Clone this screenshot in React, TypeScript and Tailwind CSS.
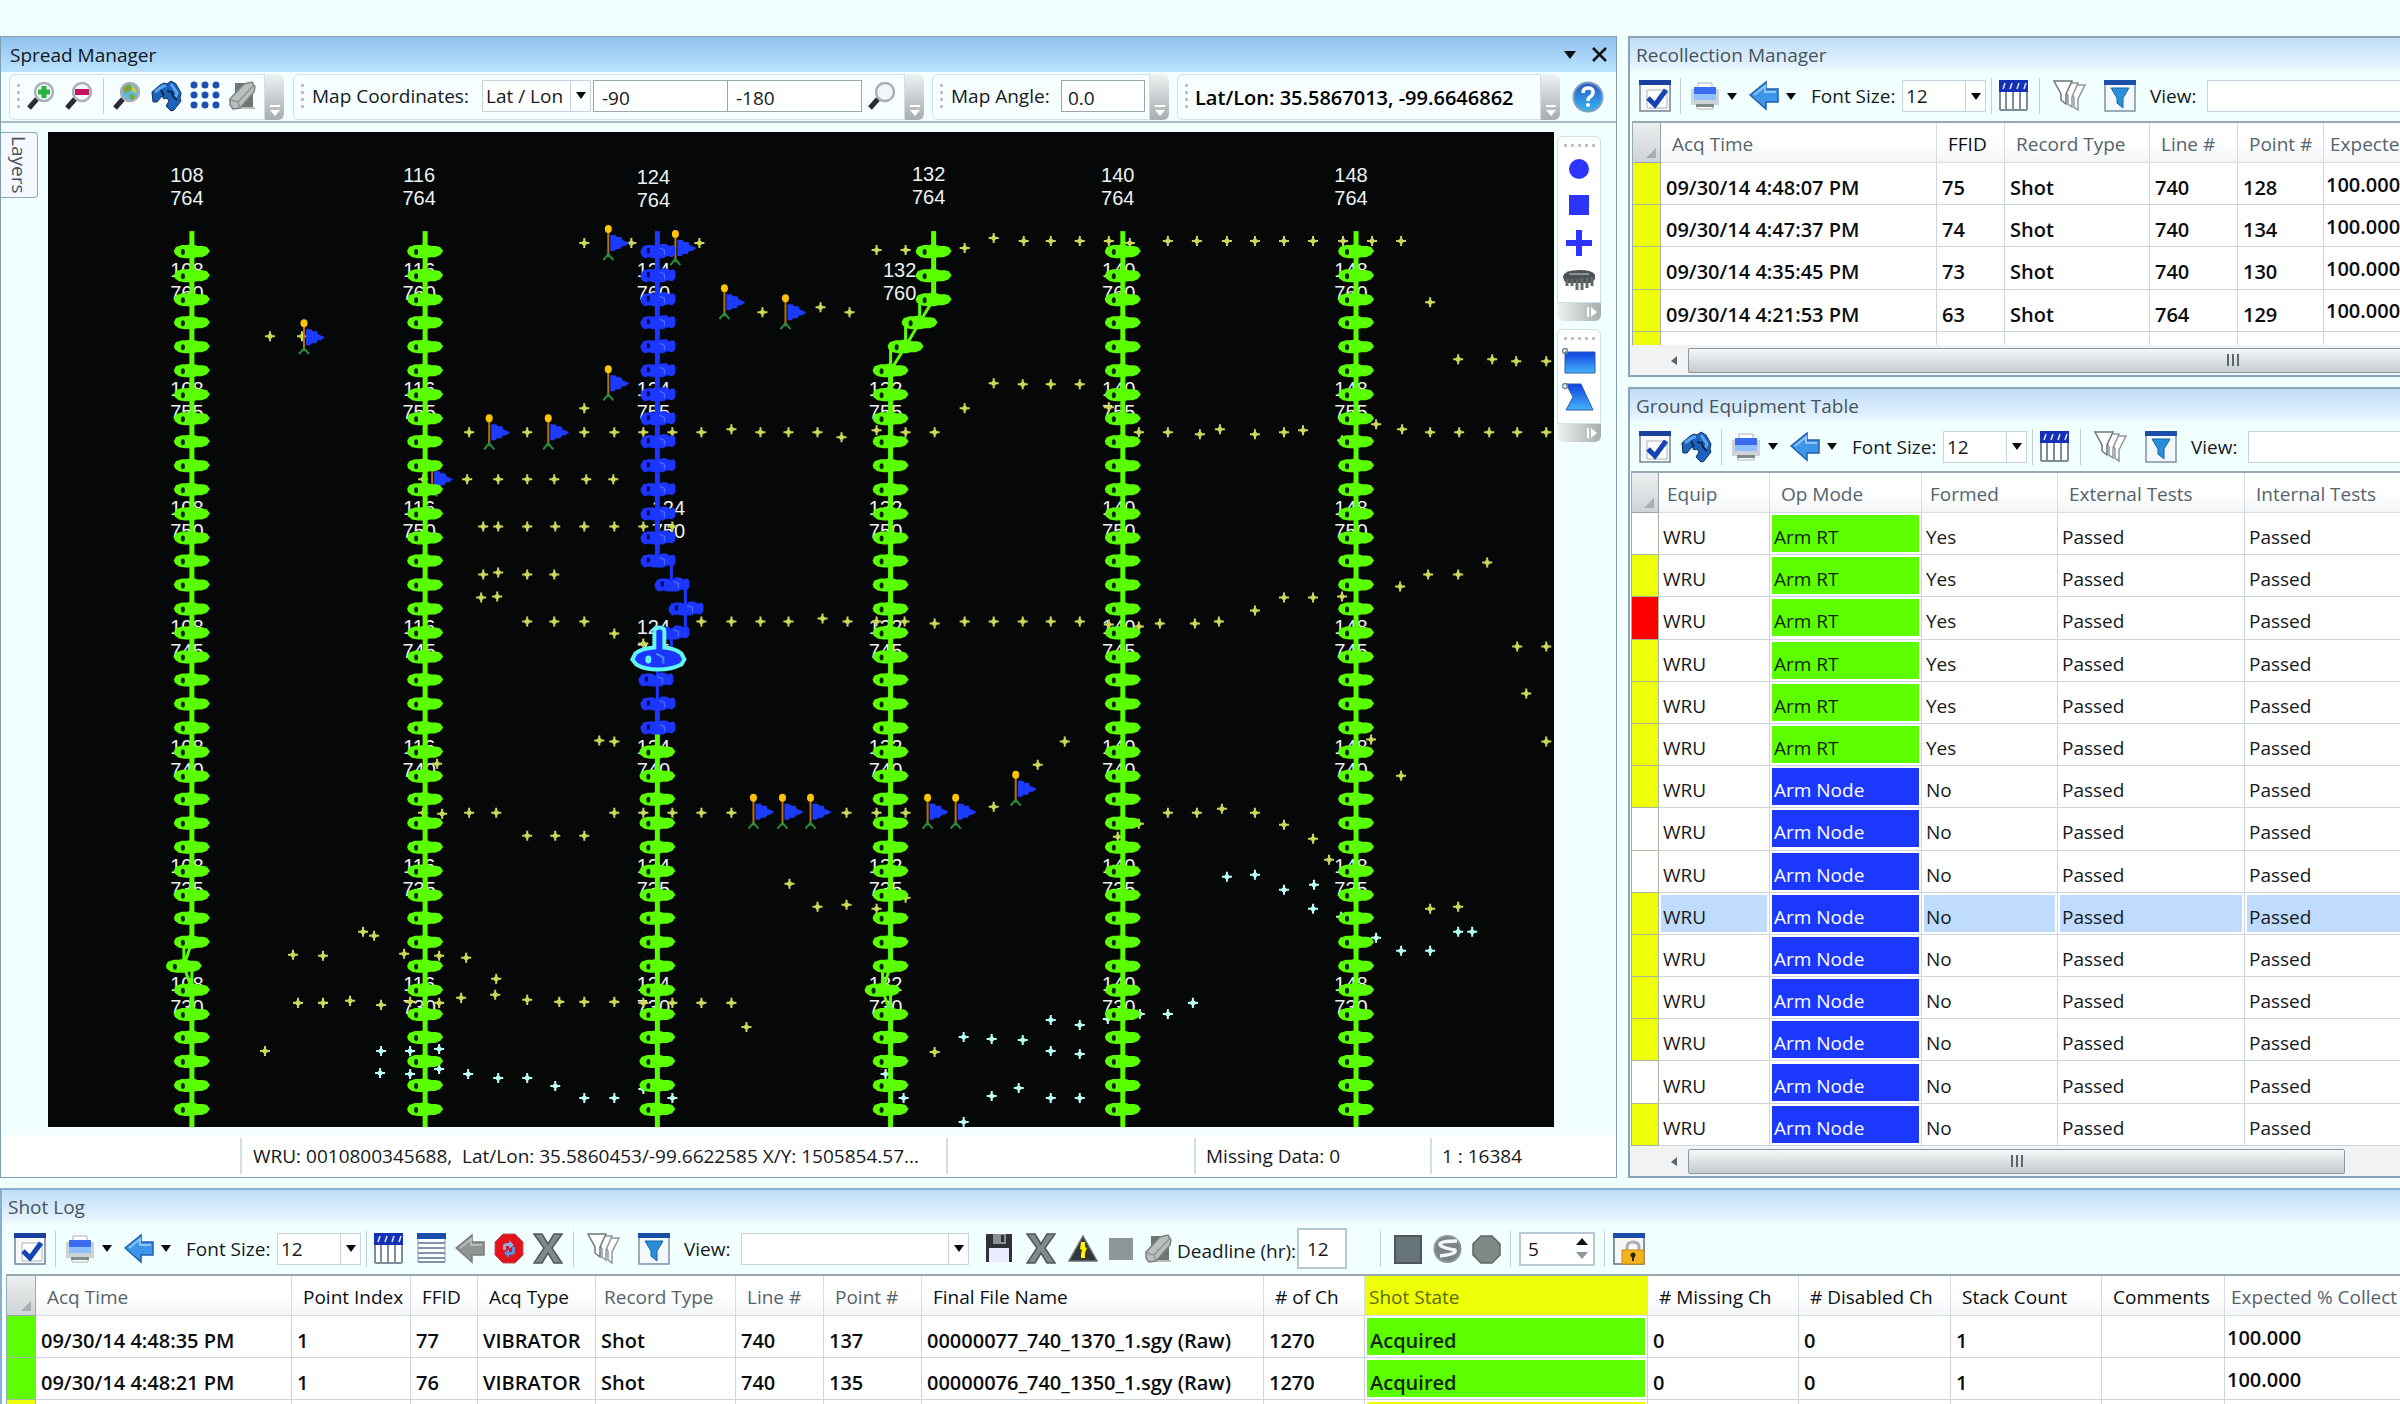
import React from "react";

/* ------------------------------------------------------------------ */
/* Survey map data                                                     */
/* ------------------------------------------------------------------ */

type Point = [number, number];

const NODE_COUNT = 37;
const nodeY = (i: number) => Math.round(251 + i * 23.8);

type Line = {
  id: string;
  x: number;
  labelX: number;
  top: Point;
  overrides?: Record<number, number>;
  labelOverrides?: Record<number, number>;
  blueUntil?: number;
};

const LINES: Line[] = [
  { id: "108", x: 192, labelX: 187, top: [187, 182], overrides: { 30: 184 } },
  { id: "116", x: 425, labelX: 419, top: [419, 182] },
  {
    id: "124",
    x: 657,
    labelX: 653,
    top: [653, 184],
    overrides: { 14: 671, 15: 685, 16: 671, 18: 655 },
    labelOverrides: { 2: 668 },
    blueUntil: 20,
  },
  {
    id: "132",
    x: 890,
    labelX: 885,
    top: [928, 181],
    overrides: { 0: 933, 1: 933, 2: 933, 3: 919, 4: 905, 31: 882 },
    labelOverrides: { 0: 899 },
  },
  { id: "140", x: 1122, labelX: 1118, top: [1117, 182] },
  { id: "148", x: 1355, labelX: 1350, top: [1350, 182] },
];

const STATIONS = ["760", "755", "750", "745", "740", "735", "730"];

const SHOTS: Point[] = [
  [584, 243], [631, 243], [699, 243], [270, 336], [302, 336], [762, 312], [584, 408],
  [469, 432], [527, 432], [584, 432], [614, 432], [643, 432], [672, 432], [701, 432], [731, 429], [760, 432], [788, 432],
  [423, 479], [467, 479], [498, 479], [527, 479], [554, 479], [586, 479], [613, 479],
  [483, 526], [498, 526], [527, 526], [555, 526], [584, 526], [614, 526], [643, 526], [672, 526],
  [483, 574], [498, 572], [527, 574], [554, 574], [481, 597], [497, 596],
  [527, 621], [554, 621], [584, 621], [701, 621], [731, 621], [760, 621], [788, 621], [614, 633], [643, 643],
  [876, 250], [905, 250], [964, 248], [993, 238], [1023, 241], [1050, 241], [1079, 241], [1108, 241], [1129, 243],
  [1167, 241], [1196, 241], [1226, 241], [1254, 241], [1283, 241], [1312, 241], [1342, 241], [1371, 241], [1400, 241],
  [820, 307], [849, 312], [1429, 302], [1457, 359], [1491, 359], [1515, 361], [1545, 361],
  [993, 383], [1022, 384], [1050, 384], [1079, 384], [964, 408], [1108, 407],
  [817, 432], [841, 437], [876, 430], [905, 432], [934, 432], [1138, 432], [1167, 432], [1199, 434], [1219, 429],
  [1254, 434], [1283, 432], [1302, 430], [1341, 440], [1375, 424], [1401, 429], [1429, 432], [1458, 432], [1488, 432],
  [1516, 432], [1545, 432], [1486, 562], [1427, 574], [1457, 574], [1399, 586], [1341, 596], [1283, 597], [1312, 597],
  [1254, 610], [1516, 646], [1545, 646], [822, 618], [847, 621], [876, 621], [904, 621], [934, 623], [964, 621],
  [993, 621], [1022, 621], [1050, 621], [1079, 621], [1108, 624], [1138, 626], [1159, 623], [1194, 623], [1218, 621],
  [599, 740], [614, 741], [437, 763], [442, 813], [423, 812], [469, 812], [496, 812], [614, 812], [643, 812], [672, 812],
  [701, 812], [731, 812], [527, 835], [555, 835], [584, 835], [789, 883], [363, 931], [374, 935], [293, 954],
  [323, 955], [404, 953], [439, 955], [466, 957], [496, 978], [298, 1002], [323, 1002], [350, 1000], [381, 1004],
  [410, 1001], [439, 1002], [461, 997], [495, 994], [527, 999], [559, 1001], [584, 1001], [614, 1001], [643, 1002],
  [672, 1002], [701, 1002], [731, 1002], [746, 1026], [265, 1050], [1064, 741], [1037, 764], [993, 806], [846, 812],
  [876, 812], [905, 812], [1138, 823], [1117, 836], [1167, 812], [1196, 812], [1221, 808], [1254, 812], [1283, 824],
  [1312, 838], [1328, 859], [1525, 693], [1545, 741], [1370, 739], [1400, 775], [817, 906], [846, 904], [876, 908],
  [905, 897], [1429, 908], [1457, 906], [934, 1051],
];

const PLANNED: Point[] = [
  [381, 1050], [410, 1050], [439, 1048], [380, 1072], [410, 1073], [439, 1068], [468, 1073], [498, 1077], [527, 1077],
  [555, 1085], [584, 1097], [614, 1097], [643, 1088], [672, 1097], [1226, 876], [1254, 874], [1283, 889], [1313, 884],
  [1312, 908], [1340, 916], [1375, 937], [1400, 950], [1429, 950], [1457, 931], [1471, 931], [1192, 1002], [1167, 1013],
  [1139, 1013], [1107, 1018], [1050, 1019], [1079, 1024], [963, 1036], [991, 1038], [1022, 1039], [1050, 1050],
  [1079, 1053], [885, 1073], [903, 1097], [991, 1095], [1018, 1087], [1050, 1097], [1079, 1097], [963, 1121],
];

const FLAGS: Point[] = [
  [608, 229], [675, 234], [724, 288], [785, 298], [304, 323], [608, 369], [489, 418], [548, 418], [432, 465],
  [753, 797], [782, 797], [810, 797], [927, 797], [955, 797], [1015, 774],
];

function Cross({ at: [x, y], color }: { at: Point; color: string }) {
  return (
    <g>
      <path d={`M${x - 5} ${y}h10M${x} ${y - 5}v10`} stroke={color} strokeWidth="2" />
      <circle cx={x} cy={y} r="2.5" fill={color} />
    </g>
  );
}

function Flag({ at: [x, y] }: { at: Point }) {
  return (
    <g transform={`translate(${x} ${y})`}>
      <path d="M0 2v25" stroke="#b86f10" strokeWidth="2" />
      <ellipse rx="3.5" ry="4" fill="#ffc400" />
      <path d="M-5 31l5-6 5 6M0 24v4" stroke="#2d8a3a" strokeWidth="2" fill="none" />
      <path d="M2 6h5l2 2h4l1 3 7 3-4 3h-3l-2 3h-4l-2 2H2z" fill="#1b3bff" />
    </g>
  );
}

function Unit({ x, y, blue }: { x: number; y: number; blue?: boolean }) {
  if (blue) {
    return (
      <g transform={`translate(${x} ${y})`}>
        <path d="M-17 0l3-5 5-1h5l4 2 4-3h5l3 2 4-1 2 2v7l-3 3-5-1-4 2H-4l-4-1-5 1-3-3z" fill="#1a36ff" />
        <path d="M-9-3v5" stroke="#050a50" strokeWidth="3" />
        <path d="M2-3l5 2v5" stroke="#5b78ff" strokeWidth="1" fill="none" />
      </g>
    );
  }
  return (
    <g transform={`translate(${x} ${y})`}>
      <path d="M-18 0l2-4 6-2h5l5-1 6 2h5l4 1 3 4-3 4-5 2h-5l-4 1h-8l-6-1-4-3z" fill="#5aff00" />
      <ellipse cx="-9" cy="1" rx="2" ry="3" fill="#062a00" />
    </g>
  );
}

function SurveyMap() {
  return (
    <svg
      className="block h-full w-full bg-[#050806]"
      viewBox="48 132 1505 994"
      preserveAspectRatio="xMidYMid slice"
      role="img"
      aria-label="Survey map"
    >
      <g fontFamily='"Liberation Sans", Arial, sans-serif' fontSize="20" fill="#eef2f4" textAnchor="middle">
        {LINES.map((line) => (
          <g key={line.id}>
            <text x={line.top[0]} y={line.top[1]}>{line.id}</text>
            <text x={line.top[0]} y={line.top[1] + 23}>764</text>
            {STATIONS.map((station, i) => {
              const x = line.labelOverrides?.[i] ?? line.labelX;
              const y = Math.round(277 + i * 118.9);
              return (
                <g key={station}>
                  <text x={x} y={y}>{line.id}</text>
                  <text x={x} y={y + 23}>{station}</text>
                </g>
              );
            })}
          </g>
        ))}
      </g>
      {SHOTS.map((p) => <Cross key={p.join()} at={p} color="#cdd65a" />)}
      {PLANNED.map((p) => <Cross key={p.join()} at={p} color="#b8fff4" />)}
      {FLAGS.map((p) => <Flag key={p.join()} at={p} />)}
      {LINES.map((line) => {
        const xs = Array.from({ length: NODE_COUNT }, (_, i) => line.overrides?.[i] ?? line.x);
        const blueUntil = line.blueUntil ?? -1;
        return (
          <g key={line.id}>
            {xs.map((x, i) => {
              const blue = i <= blueUntil;
              const from = i === 0 ? 231 : nodeY(i - 1);
              const prev = i === 0 ? x : xs[i - 1];
              const bend = blue
                ? `M${Math.max(prev, x)} ${from}V${nodeY(i)}`
                : `M${prev} ${from}L${x} ${nodeY(i)}V${from + 2}`;
              return (
                <path
                  key={i}
                  d={prev === x ? `M${x} ${from}V${nodeY(i)}` : bend}
                  stroke={blue ? "#1a36ff" : "#5aff00"}
                  strokeWidth={prev === x ? 5 : 3}
                  fill="none"
                />
              );
            })}
            <path d={`M${line.x} ${nodeY(36)}V1128`} stroke="#5aff00" strokeWidth="5" />
            {xs.map((x, i) => (
              <Unit key={i} x={x} y={nodeY(i)} blue={i <= blueUntil} />
            ))}
          </g>
        );
      })}
      <path
        d="M654 647v-16q0-4 5-4t5 4v16q11 1 17 6l3 6-3 5q-10 5-23 5-14 0-22-5l-4-5 3-6q6-5 19-6z"
        fill="#1a36ff"
        stroke="#63f4f4"
        strokeWidth="4"
      />
      <ellipse cx="648" cy="659" rx="3" ry="4" fill="#63f4f4" />
      <path d="M656 653l7 4v6" stroke="#4d8cff" strokeWidth="2" fill="none" />
    </svg>
  );
}

/* ------------------------------------------------------------------ */
/* Icons                                                               */
/* ------------------------------------------------------------------ */

function Icon({ children, w = 30, h = 32 }: { children: React.ReactNode; w?: number; h?: number }) {
  return (
    <svg width={w} height={h} viewBox={`0 0 ${w} ${h}`} fill="none" aria-hidden="true" className="block">
      {children}
    </svg>
  );
}

const LensIcon = ({ kind }: { kind: "plus" | "minus" | "globe" | "plain" }) => (
  <Icon>
    <path d="M3 28l8-9" stroke="#2b2b30" strokeWidth="5" />
    <circle cx="18" cy="12" r="9" fill={kind === "globe" ? "#5cb8e0" : "#f3f6f8"} stroke="#a9b0b4" strokeWidth="2.5" />
    {kind === "plus" && <path d="M18 6v12M12 12h12" stroke="#27b23a" strokeWidth="5" />}
    {kind === "minus" && <path d="M11 12h14" stroke="#c4135e" strokeWidth="6" />}
    {kind === "globe" && (
      <>
        <path d="M11 8l6-4 3 4-3 4-4 1zM17 14l5 1 1 3-4 2z" fill="#7ea52c" />
        <path d="M19 5l5 4 1 4-4-1z" fill="#e9c52c" />
      </>
    )}
  </Icon>
);

const BinocularsIcon = () => (
  <Icon w={31}>
    <path d="M1 12L9 5l4-2 3 1 4-3 5 3 5 9-1 5 1 3-7 9-3 1-5-5 3-5-2-3-3 1-2-3-5 6-4 0z" fill="#1b62bd" stroke="#12335f" strokeWidth="1" />
    <path d="M4 12l8-6h3M20 4l6 9-2 5" stroke="#58a6f2" strokeWidth="3" />
    <path d="M10 10l3 6M16 11l5 1 1 4 4 4" stroke="#0b2748" strokeWidth="2" />
  </Icon>
);

const DotsIcon = () => (
  <Icon>
    {[5, 15, 25].flatMap((y) =>
      [4, 15, 26].map((x) => <circle key={`${x}-${y}`} cx={x} cy={y} r="3.5" fill="#1c4fb0" />),
    )}
  </Icon>
);

const EraserIcon = () => (
  <Icon w={28}>
    <path d="M3 28h23" stroke="#b8bdbd" strokeWidth="2" />
    <path d="M6 3h18v24H6z" fill="#6f7575" />
    <path d="M1 19L15 4l8-2 3 5-1 5L11 28l-7 1-3-4z" fill="#b9bebe" stroke="#7b8080" strokeWidth="1.5" />
    <path d="M2 20l7 2 2 6M9 22L24 6" stroke="#8e9393" strokeWidth="1.5" />
  </Icon>
);

const HelpIcon = () => (
  <Icon w={32}>
    <defs>
      <linearGradient id="helpFill" x1="0" y1="0" x2="0" y2="1">
        <stop offset="0" stopColor="#2c55c4" />
        <stop offset="1" stopColor="#35b8f4" />
      </linearGradient>
    </defs>
    <circle cx="16" cy="16" r="14.5" fill="url(#helpFill)" stroke="#7d9fc0" strokeWidth="2" />
    <path d="M11 12q0-5 5-5t5 4q0 3-3 5-2 1-2 4" stroke="#fff" strokeWidth="3.5" />
    <circle cx="16" cy="24" r="2" fill="#fff" />
  </Icon>
);

const CheckSheetIcon = () => (
  <Icon w={32}>
    <path d="M1 1h30v30H1z" fill="#f7f9fb" stroke="#6f8496" strokeWidth="1.5" />
    <path d="M0 0h32v5H0z" fill="#1b3f9e" />
    <path d="M8 10h20v18H8z" fill="#fff" stroke="#a9b4bd" />
    <path d="M9 18l7 7L27 10" stroke="#1744b4" strokeWidth="5" />
  </Icon>
);

const PrinterIcon = () => (
  <Icon>
    <path d="M8 3h14v5H8zM7 24h16v5H7z" fill="#fff" stroke="#aab4b8" />
    <path d="M1 9h28v16H1z" fill="#cdd3d6" />
    <path d="M4 7h22v10H4z" fill="#3b6cf0" />
    <path d="M4 14h22v6H4z" fill="#8fc0ff" />
    <path d="M6 24h18v3H6z" fill="#7d8b84" />
  </Icon>
);

const BackArrowIcon = ({ gray = false }: { gray?: boolean }) => (
  <Icon>
    <path
      d="M1 15L17 2v7h12v13H17v7z"
      fill={gray ? "#8f9594" : "#3f95e8"}
      stroke={gray ? "#777d7c" : "#1f5fae"}
      strokeWidth="1.5"
    />
    <path d="M5 15l11-9v6h11" stroke={gray ? "#b7bcbb" : "#8cc6fb"} strokeWidth="2" />
  </Icon>
);

const ColumnsIcon = () => (
  <Icon w={29}>
    <path d="M1 1h27v29H1z" fill="#fff" stroke="#8c9aa5" />
    <path d="M0 0h29v12H0z" fill="#1430b4" />
    <path d="M4 9l2-6M11 9l2-6M18 9l2-6M25 9l2-6" stroke="#dfe8ff" strokeWidth="1.5" />
    <path d="M7 12v18M14 12v18M21 12v18" stroke="#7d8d99" strokeWidth="2" />
    <path d="M1 12v18M28 12v18M1 30h27" stroke="#7d8d99" strokeWidth="2" />
  </Icon>
);

const RowsIcon = () => (
  <Icon w={29}>
    <path d="M1 1h27v28H1z" fill="#fff" stroke="#8c9aa5" />
    <path d="M0 0h29v6H0z" fill="#1b4ea8" />
    <path d="M1 10h27M1 15h27M1 20h27M1 25h27M1 29h27" stroke="#7d94ac" strokeWidth="2" />
  </Icon>
);

const StopIcon = () => (
  <Icon>
    <path d="M9 1h12l8 8v13l-8 8H9l-8-8V9z" fill="#e3131c" stroke="#b55" />
    <path d="M9 17v-4q0-3 4-3h2V7l5 5-5 4v-3h-3v4z" fill="#8ab0ea" />
    <path d="M21 14v5q0 3-4 3h-2v3l-5-5 5-4v3h3v-5z" fill="#5f8fe0" />
  </Icon>
);

const DeleteIcon = ({ w = 30 }: { w?: number }) => (
  <Icon w={w}>
    <path d="M1 1h8l6 10 6-10h8L19 15l10 15h-8l-6-10-6 10H1l10-15z" fill="#828989" stroke="#50575a" strokeWidth="1.5" />
  </Icon>
);

const FunnelsIcon = () => (
  <Icon w={34}>
    <path d="M14 5h18l-7 14v11l-4-3V18z" fill="#fff" stroke="#8f999c" strokeWidth="1.5" />
    <path d="M8 3h17l-6 14v10l-4-3V16z" fill="#fff" stroke="#8f999c" strokeWidth="1.5" />
    <path d="M1 1h18l-6 13v10l-5-4v-6z" fill="#fff" stroke="#6d777b" strokeWidth="1.5" />
  </Icon>
);

const FilterIcon = () => (
  <Icon w={32}>
    <path d="M1 1h30v30H1z" fill="#f3f8fc" stroke="#7d93a5" strokeWidth="1.5" />
    <path d="M0 0h32v5H0z" fill="#1b4ea8" />
    <path d="M7 8h18l-6 10v10l-6-5v-5z" fill="#2a8fd8" stroke="#1463a8" />
  </Icon>
);

const SaveIcon = () => (
  <Icon w={28}>
    <path d="M1 1h26v28H1z" fill="#2f3338" />
    <path d="M8 1h13v10H8z" fill="#8b9196" />
    <path d="M16 2h3v7h-3z" fill="#2f3338" />
    <path d="M4 15h20v14H4z" fill="#e9ecff" />
  </Icon>
);

const WarnIcon = () => (
  <Icon>
    <path d="M15 3l14 25H1z" fill="#33363a" stroke="#6b7070" strokeWidth="1.5" />
    <path d="M13 9h4v5l2 1-2 5v5h-4v-4l1-4-2-1z" fill="#fff200" />
  </Icon>
);

const SquareIcon = ({ light = false }: { light?: boolean }) => (
  <Icon w={light ? 24 : 28}>
    <path d={light ? "M0 5h24v22H0z" : "M1 3h26v27H1z"} fill={light ? "#8e9797" : "#68747c"} stroke={light ? "none" : "#4c565c"} strokeWidth="2" />
  </Icon>
);

const SweepIcon = () => (
  <Icon w={29}>
    <circle cx="14.5" cy="16" r="13" fill="#7a8487" stroke="#8c9598" strokeWidth="2" />
    <path d="M24 8Q8 8 7 11t15 6q2 4-15 6" stroke="#f4f6f6" strokeWidth="3.5" />
  </Icon>
);

const OctagonIcon = () => (
  <Icon w={29}>
    <path d="M9 3h11l8 8v11l-8 8H9l-8-8V11z" fill="#7e8988" stroke="#5c6766" strokeWidth="1.5" />
  </Icon>
);

const LockSheetIcon = () => (
  <Icon w={32}>
    <path d="M1 1h30v30H1z" fill="#f4f6f8" stroke="#5f7486" strokeWidth="1.5" />
    <path d="M0 0h32v5H0z" fill="#1b4ea8" />
    <path d="M14 18v-4q0-5 6-5t6 5v4" stroke="#aab0b3" strokeWidth="3" />
    <path d="M9 17h22v14H9z" fill="#f2b31c" stroke="#c98a10" />
    <circle cx="20" cy="22" r="2.5" fill="#2b2100" />
    <path d="M20 22v6" stroke="#2b2100" strokeWidth="2" />
  </Icon>
);

const BrushIcon = () => (
  <Icon w={34} h={22}>
    <path d="M1 7q2-6 16-6t16 5v4l-4 4H5q-4-2-4-7z" fill="#4c5255" />
    <path d="M5 10v7M10 10v7M15 10v11M20 9v12M25 9v10M30 8v9" stroke="#63696b" strokeWidth="3" />
    <path d="M7 5h20" stroke="#8d9496" strokeWidth="2" />
  </Icon>
);

const ShapeIcon = ({ polygon = false }: { polygon?: boolean }) => (
  <Icon w={34} h={30}>
    <defs>
      <linearGradient id={polygon ? "polyFill" : "rectFill"} x1="0" y1="0" x2="0" y2="1">
        <stop offset="0" stopColor="#0f3fe0" />
        <stop offset="1" stopColor="#45b4f6" />
      </linearGradient>
    </defs>
    {polygon ? (
      <path d="M4 2h15l12 26H4l7-13z" fill="url(#polyFill)" stroke="#2b5dae" />
    ) : (
      <path d="M3 5h30v21H3z" fill="url(#rectFill)" stroke="#2b5dae" />
    )}
    <circle cx="3" cy="4" r="2.5" stroke="#6d8a8c" strokeWidth="1.5" />
  </Icon>
);

/* ------------------------------------------------------------------ */
/* Shared controls                                                     */
/* ------------------------------------------------------------------ */

function Tool({ label, className = "", children }: { label: string; className?: string; children: React.ReactNode }) {
  return (
    <button type="button" aria-label={label} title={label} className={`shrink-0 ${className}`}>
      {children}
    </button>
  );
}

const Caret = () => (
  <svg width="10" height="7" viewBox="0 0 10 7" aria-hidden="true" className="block">
    <path d="M0 0h10L5 7z" fill="#0a0a0a" />
  </svg>
);

const Sep = ({ className = "" }: { className?: string }) => (
  <span className={`h-9 w-px shrink-0 bg-[#c3ced6] ${className}`} />
);

const Grip = () => (
  <span className="flex flex-col gap-1" aria-hidden="true">
    {[0, 1, 2, 3].map((i) => (
      <span key={i} className="size-[3px] bg-[#b9c3cb]" />
    ))}
  </span>
);

function ComboBox({
  id, value, className = "", caretWidth = "w-5",
}: { id: string; value: string; className?: string; caretWidth?: string }) {
  return (
    <span className={`relative flex h-8 shrink-0 border border-[#c3d5de] bg-white ${className}`}>
      <select id={id} defaultValue={value} className="w-full appearance-none bg-transparent pl-[3px] text-[19px] leading-6 outline-none">
        <option value={value}>{value}</option>
      </select>
      <span className={`pointer-events-none absolute inset-y-0 right-0 flex items-center justify-center border-l border-[#c3d5de] ${caretWidth}`}>
        <Caret />
      </span>
    </span>
  );
}

function ToolGroup({ children }: { children: React.ReactNode }) {
  return (
    <div className="flex h-[46px] shrink-0">
      <div className="flex items-center rounded-l-md border border-[#cfdfe6] bg-[#f7feff] pb-[2px] pl-[7px]">
        <Grip />
        {children}
      </div>
      <button
        type="button"
        aria-label="Toolbar options"
        className="flex w-[19px] flex-col items-center justify-end gap-[3px] rounded-r-md bg-linear-to-b from-[#eef2f3] to-[#a8adaf] pb-1"
      >
        <span className="h-[2px] w-[10px] bg-white" />
        <svg width="10" height="6" viewBox="0 0 10 6" aria-hidden="true"><path d="M0 0h10L5 6z" fill="#fff" /></svg>
      </button>
    </div>
  );
}

function TitleBar({ title, active = false }: { title: string; active?: boolean }) {
  return (
    <header
      className={
        active
          ? "flex h-[35px] shrink-0 items-center bg-linear-to-b from-[#8fc1ed] to-[#bbe3ff] px-[9px] text-[#101820]"
          : "flex h-[33px] shrink-0 items-center bg-linear-to-b from-[#bfdcf7] to-[#ecf8ff] px-[6px] text-[#46535f]"
      }
    >
      <h2 className="flex-1 text-[19px] leading-6">{title}</h2>
      {active && (
        <div className="flex items-center gap-4">
          <button type="button" aria-label="Window menu"><svg width="12" height="8" viewBox="0 0 12 8"><path d="M0 0h12L6 8z" fill="#101010" /></svg></button>
          <button type="button" aria-label="Close">
            <svg width="15" height="15" viewBox="0 0 15 15"><path d="M1 1l13 13M14 1L1 14" stroke="#101010" strokeWidth="2.5" /></svg>
          </button>
        </div>
      )}
    </header>
  );
}

function TableTools({ id, search = false }: { id: string; search?: boolean }) {
  return (
    <>
      <Tool label="Select rows"><CheckSheetIcon /></Tool>
      {search && <Tool label="Find" className="ml-[10px]"><BinocularsIcon /></Tool>}
      <Sep className="ml-[9px]" />
      <Tool label="Print" className="ml-[9px]"><PrinterIcon /></Tool>
      <Tool label="Print options" className="ml-[7px]"><Caret /></Tool>
      <Tool label="Back" className="ml-[12px]"><BackArrowIcon /></Tool>
      <Tool label="Back options" className="ml-[7px]"><Caret /></Tool>
      <label htmlFor={`${id}-font`} className="ml-[15px] w-[91px] shrink-0 whitespace-nowrap text-[19px] leading-6">Font Size:</label>
      <ComboBox id={`${id}-font`} value="12" className="w-[84px]" />
      <Sep className="ml-[5px]" />
      <Tool label="Columns" className="ml-[7px]"><ColumnsIcon /></Tool>
    </>
  );
}

function ViewTools({ id }: { id: string }) {
  return (
    <>
      <Tool label="Clear filters" className="ml-[13px]"><FunnelsIcon /></Tool>
      <Tool label="Filter" className="ml-[17px]"><FilterIcon /></Tool>
      <label htmlFor={`${id}-view`} className="ml-[14px] w-[57px] shrink-0 text-[19px] leading-6">View:</label>
    </>
  );
}

function ScrollBar({ thumb, grip }: { thumb: string; grip: string }) {
  return (
    <div className="flex h-[30px] shrink-0 items-center bg-[#f1f3f5] pl-[41px]" aria-hidden="true">
      <svg width="6" height="9" viewBox="0 0 6 9"><path d="M6 0v9L0 5z" fill="#5b666d" /></svg>
      <div className={`ml-[11px] flex h-[25px] items-center rounded-xs border border-[#8d989e] bg-linear-to-b from-[#f6f7f8] to-[#c3cbcf] ${thumb}`}>
        <div className={`flex gap-[3px] ${grip}`}>
          {[0, 1, 2].map((i) => <span key={i} className="h-3 w-[2px] bg-[#5b666d]" />)}
        </div>
      </div>
    </div>
  );
}

/* ------------------------------------------------------------------ */
/* Data grid                                                           */
/* ------------------------------------------------------------------ */

type Column = { name: string; width: number; dark?: boolean; highlight?: boolean; raised?: boolean; indent?: string };
type Mark = "white" | "yellow" | "red" | "green";
type Fill = "green" | "blue" | "yellow";
type Row = { mark: Mark; cells: string[]; fills?: Record<number, Fill>; selected?: boolean };

const MARKS: Record<Mark, string> = {
  white: "bg-white", yellow: "bg-[#eeff0a]", red: "bg-[#ff0000]", green: "bg-[#5cff00]",
};
const FILLS: Record<Fill, string> = {
  green: "bg-[#5cff00] text-[#10240a]", blue: "bg-[#1c38ff] text-white", yellow: "bg-[#eeff0a]",
};

function DataGrid({
  label, markWidth, columns, rows, bold = false, className = "",
}: { label: string; markWidth: number; columns: Column[]; rows: Row[]; bold?: boolean; className?: string }) {
  const total = columns.reduce((sum, c) => sum + c.width, markWidth);
  const drop = bold ? "pl-[3px] pt-[9px]" : "pl-[2px] pt-[7px]";
  return (
    <table
      aria-label={label}
      className={`table-fixed border-separate border-spacing-0 bg-white text-[19px] leading-6 ${className}`}
      style={{ width: total }}
    >
      <colgroup>
        <col style={{ width: markWidth }} />
        {columns.map((c) => <col key={c.name} style={{ width: c.width }} />)}
      </colgroup>
      <thead>
        <tr className="h-10">
          <th aria-label="Status" className="border-b border-r border-[#98a5ad] bg-linear-to-b from-[#eceeef] to-[#cfd4d6] p-0 align-bottom">
            <svg width="10" height="10" viewBox="0 0 10 10" className="mb-1 ml-auto mr-1 block"><path d="M10 0v10H0z" fill="#a7b0b0" /></svg>
          </th>
          {columns.map((c) => (
            <th
              key={c.name}
              className={`overflow-hidden whitespace-nowrap border-b border-r border-[#d5dde1] p-0 pt-[2px] text-left font-normal ${c.indent ?? "pl-[11px]"} ${
                c.highlight ? "bg-[#eeff0a] text-[#5d6a00]" : "bg-linear-to-b from-white from-45% to-[#f3f6f9]"
              } ${c.dark ? "text-[#0c0f12]" : c.highlight ? "" : "text-[#56636d]"}`}
            >
              {c.name}
            </th>
          ))}
        </tr>
      </thead>
      <tbody className={bold ? "text-[20px] font-semibold text-[#0b0d10]" : "text-[#15191d]"}>
        {rows.map((row, r) => (
          <tr key={r} className="h-[42px]">
            <td className={`border-b border-r border-[#aab79a] p-0 ${MARKS[row.mark]}`} />
            {row.cells.map((cell, i) => (
              <td key={i} className="overflow-hidden whitespace-nowrap border-b border-r border-[#cdd6da] p-[2px]">
                <div
                  className={`flex h-[37px] items-center ${columns[i].raised ? "pt-[2px]" : drop} ${
                    row.fills?.[i] ? FILLS[row.fills[i]] : row.selected ? "bg-[#bfdcff]" : ""
                  }`}
                >
                  {cell}
                </div>
              </td>
            ))}
          </tr>
        ))}
      </tbody>
    </table>
  );
}

const RECOLLECTION_COLUMNS: Column[] = [
  { name: "Acq Time", width: 276 },
  { name: "FFID", width: 68, dark: true },
  { name: "Record Type", width: 145 },
  { name: "Line #", width: 88 },
  { name: "Point #", width: 86 },
  { name: "Expected % Collect", width: 200, raised: true, indent: "pl-[6px]" },
];
const RECOLLECTION_ROWS: Row[] = [
  { mark: "yellow", cells: ["09/30/14 4:48:07 PM", "75", "Shot", "740", "128", "100.000"] },
  { mark: "yellow", cells: ["09/30/14 4:47:37 PM", "74", "Shot", "740", "134", "100.000"] },
  { mark: "yellow", cells: ["09/30/14 4:35:45 PM", "73", "Shot", "740", "130", "100.000"] },
  { mark: "yellow", cells: ["09/30/14 4:21:53 PM", "63", "Shot", "764", "129", "100.000"] },
  { mark: "yellow", cells: ["", "", "", "", "", ""] },
];

const GROUND_COLUMNS: Column[] = [
  { name: "Equip", width: 111, indent: "pl-2" },
  { name: "Op Mode", width: 152 },
  { name: "Formed", width: 136, indent: "pl-2" },
  { name: "External Tests", width: 187 },
  { name: "Internal Tests", width: 200 },
];
const GROUND_MARKS: Mark[] = [
  "white", "yellow", "red", "yellow", "yellow", "yellow", "yellow", "white", "white", "yellow", "yellow", "yellow",
  "yellow", "white", "yellow",
];
const GROUND_ROWS: Row[] = GROUND_MARKS.map((mark, i) => {
  const realTime = i < 6;
  return {
    mark,
    selected: i === 9,
    cells: ["WRU", realTime ? "Arm RT" : "Arm Node", realTime ? "Yes" : "No", "Passed", "Passed"],
    fills: { 1: realTime ? "green" : "blue" },
  };
});

const SHOT_COLUMNS: Column[] = [
  { name: "Acq Time", width: 256 },
  { name: "Point Index", width: 119, dark: true },
  { name: "FFID", width: 67, dark: true },
  { name: "Acq Type", width: 118, dark: true },
  { name: "Record Type", width: 140, indent: "pl-2" },
  { name: "Line #", width: 88 },
  { name: "Point #", width: 98 },
  { name: "Final File Name", width: 342, dark: true },
  { name: "# of Ch", width: 101, dark: true },
  { name: "Shot State", width: 283, highlight: true, indent: "pl-1" },
  { name: "# Missing Ch", width: 151, dark: true },
  { name: "# Disabled Ch", width: 152, dark: true },
  { name: "Stack Count", width: 151, dark: true },
  { name: "Comments", width: 123, dark: true },
  { name: "Expected % Collect", width: 200, raised: true, indent: "pl-[6px]" },
];
const SHOT_ROWS: Row[] = [
  {
    mark: "green",
    cells: ["09/30/14 4:48:35 PM", "1", "77", "VIBRATOR", "Shot", "740", "137", "00000077_740_1370_1.sgy (Raw)", "1270", "Acquired", "0", "0", "1", "", "100.000"],
    fills: { 9: "green" },
  },
  {
    mark: "green",
    cells: ["09/30/14 4:48:21 PM", "1", "76", "VIBRATOR", "Shot", "740", "135", "00000076_740_1350_1.sgy (Raw)", "1270", "Acquired", "0", "0", "1", "", "100.000"],
    fills: { 9: "green" },
  },
  { mark: "yellow", cells: Array(15).fill(""), fills: { 9: "yellow" } },
];

/* ------------------------------------------------------------------ */
/* Panels                                                              */
/* ------------------------------------------------------------------ */

function SideStrip({ children }: { children: React.ReactNode }) {
  return (
    <div className="flex w-[44px] flex-col">
      <div className="flex flex-col items-center rounded-t-md border border-[#cfdfe6] bg-white pt-[7px] pb-[11px]">
        <span className="flex gap-1" aria-hidden="true">
          {[0, 1, 2, 3, 4].map((i) => <span key={i} className="size-[3px] bg-[#b9c3cb]" />)}
        </span>
        {children}
      </div>
      <button type="button" aria-label="More tools" className="flex h-[18px] items-center justify-end gap-[2px] rounded-b-md bg-linear-to-r from-[#eef2f3] to-[#a8adaf] pr-1">
        <span className="h-[10px] w-[2px] bg-white" />
        <svg width="6" height="10" viewBox="0 0 6 10" aria-hidden="true"><path d="M0 0v10l6-5z" fill="#fff" /></svg>
      </button>
    </div>
  );
}

function SpreadManager() {
  return (
    <section className="flex min-w-0 flex-col overflow-hidden border border-[#7f9db5] bg-[#f2ffff]">
      <TitleBar title="Spread Manager" active />
      <div className="flex h-[51px] shrink-0 items-center border-b-2 border-[#a9bcc4] pl-2">
        <ToolGroup>
          <Tool label="Zoom in" className="ml-[6px]"><LensIcon kind="plus" /></Tool>
          <Tool label="Zoom out" className="ml-2"><LensIcon kind="minus" /></Tool>
          <Sep className="ml-[9px]" />
          <Tool label="Zoom to world" className="ml-2"><LensIcon kind="globe" /></Tool>
          <Tool label="Find" className="ml-[9px]"><BinocularsIcon /></Tool>
          <Tool label="Show grid" className="ml-2"><DotsIcon /></Tool>
          <Tool label="Erase" className="ml-[9px] mr-[7px]"><EraserIcon /></Tool>
        </ToolGroup>
        <span className="w-[9px] shrink-0" />
        <ToolGroup>
          <label htmlFor="coord-system" className="ml-2 w-[170px] whitespace-nowrap text-[19px] leading-6">Map Coordinates:</label>
          <ComboBox id="coord-system" value="Lat / Lon" className="w-[109px]" />
          <input aria-label="Latitude" defaultValue="-90" className="ml-[2px] h-8 w-[135px] border border-[#98a7b0] bg-white pl-2 pt-1 text-[19px] leading-6" />
          <input aria-label="Longitude" defaultValue="-180" className="h-8 w-[134px] border border-l-0 border-[#98a7b0] bg-white pl-2 pt-1 text-[19px] leading-6" />
          <Tool label="Go to coordinates" className="ml-[5px] mr-[7px]"><LensIcon kind="plain" /></Tool>
        </ToolGroup>
        <span className="w-2 shrink-0" />
        <ToolGroup>
          <label htmlFor="map-angle" className="ml-2 w-[110px] whitespace-nowrap text-[19px] leading-6">Map Angle:</label>
          <input id="map-angle" defaultValue="0.0" className="mr-1 h-8 w-[84px] border border-[#98a7b0] bg-white pl-[6px] pt-1 text-[19px] leading-6" />
        </ToolGroup>
        <span className="w-2 shrink-0" />
        <ToolGroup>
          <output className="ml-[7px] w-[345px] whitespace-nowrap pt-1 text-[20px] leading-6 font-semibold text-black">Lat/Lon: 35.5867013, -99.6646862</output>
        </ToolGroup>
        <Tool label="Help" className="ml-3"><HelpIcon /></Tool>
      </div>
      <div className="flex min-h-0 flex-1 pt-[9px]">
        <div className="w-[47px] shrink-0">
          <button type="button" className="flex h-[66px] w-[37px] items-center justify-center rounded-r-sm border border-l-0 border-[#8fa9bd] bg-[#f5f8ff] text-[19px] leading-6 text-[#46535f] [writing-mode:vertical-rl]">
            Layers
          </button>
        </div>
        <div className="min-w-0 flex-1">
          <SurveyMap />
        </div>
        <div className="w-[62px] shrink-0 pl-[3px] pt-1">
          <SideStrip>
            <Tool label="Point" className="mt-[12px]"><span className="block size-5 rounded-full bg-[#2b35ff]" /></Tool>
            <Tool label="Square" className="mt-4"><span className="block size-5 bg-[#2b35ff]" /></Tool>
            <Tool label="Cross" className="mt-[15px]">
              <svg width="26" height="26" viewBox="0 0 26 26" aria-hidden="true" className="block"><path d="M13 0v26M0 13h26" stroke="#2b35ff" strokeWidth="6" /></svg>
            </Tool>
            <Tool label="Brush" className="mt-[13px]"><BrushIcon /></Tool>
          </SideStrip>
          <div className="h-2" />
          <SideStrip>
            <Tool label="Rectangle" className="mt-[7px]"><ShapeIcon /></Tool>
            <Tool label="Polygon" className="mt-[5px]"><ShapeIcon polygon /></Tool>
          </SideStrip>
        </div>
      </div>
      <footer className="mt-2 flex h-[42px] shrink-0 items-center bg-white text-[19px] leading-6 text-[#15191d]">
        <span className="w-[239px] shrink-0" />
        <span className="flex h-9 w-[706px] items-center whitespace-pre border-l-2 border-[#cfe0ea] pl-[11px]">
          WRU: 0010800345688,  Lat/Lon: 35.5860453/-99.6622585 X/Y: 1505854.57...
        </span>
        <span className="h-9 w-[248px] border-l-2 border-[#cfe0ea]" />
        <span className="flex h-9 w-[236px] items-center border-l-2 border-[#cfe0ea] pl-[10px]">Missing Data: 0</span>
        <span className="flex h-9 items-center border-l-2 border-[#cfe0ea] pl-[10px]">1 : 16384</span>
      </footer>
    </section>
  );
}

function RecollectionManager() {
  return (
    <section className="flex h-[341px] shrink-0 flex-col overflow-hidden border-2 border-r-0 border-[#8aa5b9] bg-[#f2ffff]">
      <TitleBar title="Recollection Manager" />
      <div className="flex h-[50px] shrink-0 items-center pl-[9px]">
        <TableTools id="recollection" />
        <Sep className="ml-[11px]" />
        <ViewTools id="recollection" />
        <input id="recollection-view" className="h-8 min-w-0 flex-1 border border-r-0 border-[#c3d5de] bg-white" />
      </div>
      <div className="ml-[2px] min-h-0 flex-1 overflow-hidden border-l border-t-2 border-[#98a9b4]">
        <DataGrid label="Recollection records" markWidth={28} columns={RECOLLECTION_COLUMNS} rows={RECOLLECTION_ROWS} bold className="h-[251px]" />
      </div>
      <ScrollBar thumb="flex-1 border-r-0 mr-[-8px]" grip="ml-[538px]" />
    </section>
  );
}

function GroundEquipment() {
  return (
    <section className="flex min-h-0 flex-1 flex-col overflow-hidden border-2 border-r-0 border-[#8aa5b9] bg-[#f2ffff]">
      <TitleBar title="Ground Equipment Table" />
      <div className="flex h-[49px] shrink-0 items-center pl-[9px]">
        <TableTools id="ground" search />
        <Sep className="ml-[11px]" />
        <ViewTools id="ground" />
        <input id="ground-view" className="h-8 min-w-0 flex-1 border border-r-0 border-[#c3d5de] bg-white" />
      </div>
      <div className="ml-px min-h-0 flex-1 overflow-hidden border-l border-t-2 border-[#98a9b4] bg-white">
        <DataGrid label="Ground equipment" markWidth={27} columns={GROUND_COLUMNS} rows={GROUND_ROWS} className="h-[673px]" />
      </div>
      <ScrollBar thumb="mr-[55px] flex-1 justify-center" grip="" />
    </section>
  );
}

function ShotLog() {
  return (
    <section className="flex h-[216px] shrink-0 flex-col overflow-hidden border-l-2 border-t-2 border-[#8aaed0] bg-[#f2ffff]">
      <TitleBar title="Shot Log" />
      <div className="flex h-[51px] shrink-0 items-center pl-3">
        <TableTools id="shots" />
        <Tool label="Rows" className="ml-[14px]"><RowsIcon /></Tool>
        <Tool label="Undo" className="ml-[9px]"><BackArrowIcon gray /></Tool>
        <Tool label="Stop" className="ml-[9px]"><StopIcon /></Tool>
        <Tool label="Delete" className="ml-[9px]"><DeleteIcon /></Tool>
        <Sep className="ml-[10px]" />
        <ViewTools id="shots" />
        <ComboBox id="shots-view" value="" className="w-[228px]" />
        <Tool label="Save view" className="ml-[16px]"><SaveIcon /></Tool>
        <Tool label="Delete view" className="ml-[13px]"><DeleteIcon w={31} /></Tool>
        <Tool label="Warnings" className="ml-[11px]"><WarnIcon /></Tool>
        <Tool label="Stop view" className="ml-[11px]"><SquareIcon light /></Tool>
        <Tool label="Erase" className="ml-3"><EraserIcon /></Tool>
        <label htmlFor="deadline" className="ml-1 w-[120px] shrink-0 whitespace-nowrap pt-1 text-[19px] leading-6">Deadline (hr):</label>
        <input id="deadline" defaultValue="12" className="h-[41px] w-[50px] shrink-0 border-2 border-[#b9c9d1] bg-white pl-2 text-[19px] leading-6" />
        <Sep className="ml-[33px]" />
        <Tool label="Block" className="ml-[13px]"><SquareIcon /></Tool>
        <Tool label="Sweep" className="ml-[11px]"><SweepIcon /></Tool>
        <Tool label="Halt" className="ml-[10px]"><OctagonIcon /></Tool>
        <Sep className="ml-[9px]" />
        <span className="ml-2 flex h-[34px] w-[76px] shrink-0 items-center border-2 border-[#b9c9d1] bg-white pr-[5px]">
          <input aria-label="Count" defaultValue="5" className="min-w-0 flex-1 pl-[7px] text-[19px] leading-6" />
          <span className="flex flex-col gap-[7px]">
            <button type="button" aria-label="Increase"><svg width="12" height="7" viewBox="0 0 12 7" className="block"><path d="M0 7h12L6 0z" fill="#111" /></svg></button>
            <button type="button" aria-label="Decrease"><svg width="12" height="7" viewBox="0 0 12 7" className="block"><path d="M0 0h12L6 7z" fill="#8b979b" /></svg></button>
          </span>
        </span>
        <Sep className="ml-[9px]" />
        <Tool label="Lock" className="ml-2"><LockSheetIcon /></Tool>
      </div>
      <div className="ml-1 min-h-0 flex-1 overflow-hidden border-l border-t-2 border-[#98a9b4]">
        <DataGrid label="Shot log" markWidth={29} columns={SHOT_COLUMNS} rows={SHOT_ROWS} bold />
      </div>
    </section>
  );
}

export default function App() {
  return (
    <div className='flex h-screen flex-col gap-[10px] overflow-hidden bg-[#f2ffff] pt-9 font-["Open_Sans","Noto_Sans",sans-serif] text-[#15191d]'>
      <main className="grid min-h-0 flex-1 grid-cols-[minmax(0,1617fr)_minmax(0,772fr)] gap-[11px]">
        <SpreadManager />
        <div className="flex min-h-0 min-w-0 flex-col gap-[10px]">
          <RecollectionManager />
          <GroundEquipment />
        </div>
      </main>
      <ShotLog />
    </div>
  );
}
